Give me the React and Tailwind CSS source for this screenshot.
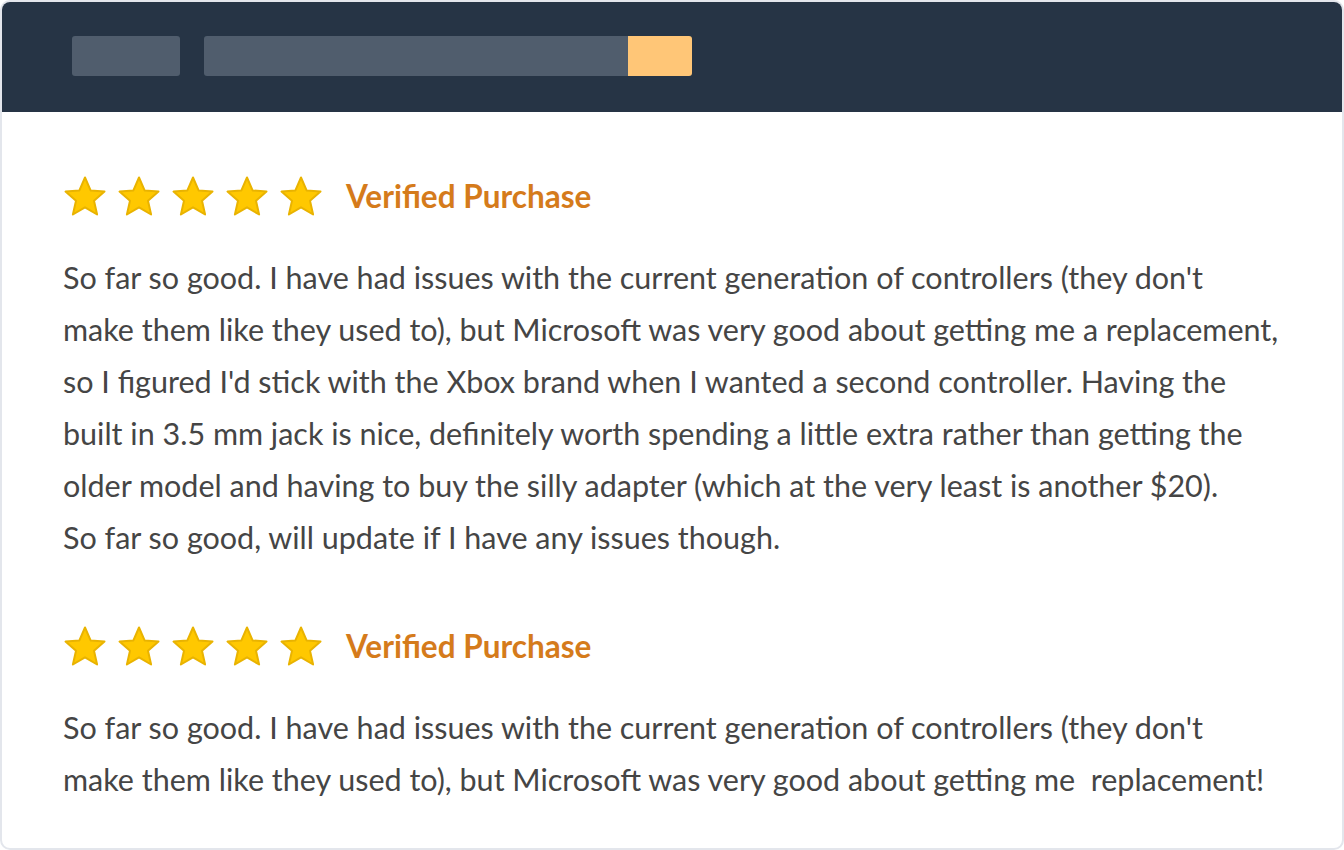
import React from 'react';

const reviews = [
  {
    id: 1,
    lines: [
      "So far so good. I have had issues with the current generation of controllers (they don't",
      'make them like they used to), but Microsoft was very good about getting me a replacement,',
      "so I figured I'd stick with the Xbox brand when I wanted a second controller. Having the",
      'built in 3.5 mm jack is nice, definitely worth spending a little extra rather than getting the',
      'older model and having to buy the silly adapter (which at the very least is another $20).',
      'So far so good, will update if I have any issues though.',
    ],
  },
  {
    id: 2,
    lines: [
      "So far so good. I have had issues with the current generation of controllers (they don't",
      'make them like they used to), but Microsoft was very good about getting me  replacement!',
    ],
  },
];

const Star = () => (
  <svg width="46" height="44" viewBox="0 0 46 44">
    <polygon
      points="23,2.5 28.6,15.4 42.5,16.6 32,25.8 35.1,39.5 23,32.3 10.9,39.5 14,25.8 3.5,16.6 17.4,15.4"
      fill="#ffc800"
      stroke="#e9b300"
      strokeWidth="2"
      strokeLinejoin="round"
    />
  </svg>
);

const Review = ({ review }) => (
  <div>
    {/* Rating */}
    <div className="flex items-center h-[44px]">
      <div className="flex gap-[8px] ml-[-1px]">
        {[0, 1, 2, 3, 4].map((i) => (
          <Star key={i} />
        ))}
      </div>
      <span className="ml-[22px] text-[31.5px] font-bold text-[#d57b1b] leading-none">
        Verified Purchase
      </span>
    </div>

    {/* Body */}
    <p className="mt-[32px] text-[30.5px] leading-[52px] text-[#454545] whitespace-pre">
      {review.lines.map((line, i) => (
        <React.Fragment key={i}>
          {line}
          {i < review.lines.length - 1 && <br />}
        </React.Fragment>
      ))}
    </p>
  </div>
);

const App = () => {
  return (
    <div
      className="w-[1344px] h-[850px] bg-white"
      style={{ fontFamily: 'Lato, "Open Sans", sans-serif' }}
    >
      <div className="h-full rounded-[10px] border-2 border-[#e3e6ec] overflow-hidden flex flex-col">
        {/* Header */}
        <div className="h-[112px] bg-[#263445] flex items-center pl-[72px] gap-[24px] shrink-0 -mx-[2px] -mt-[2px]">
          <div className="w-[108px] h-[40px] rounded-[3px] bg-[#505d6d]" />
          <div className="flex h-[40px] rounded-[3px] overflow-hidden">
            <div className="w-[424px] bg-[#505d6d]" />
            <div className="w-[64px] bg-[#ffc677]" />
          </div>
        </div>

        {/* Reviews */}
        <div className="pl-[61px] pt-[63px] flex flex-col gap-[62px]">
          {reviews.map((review) => (
            <Review key={review.id} review={review} />
          ))}
        </div>
      </div>
    </div>
  );
};

export default App;
